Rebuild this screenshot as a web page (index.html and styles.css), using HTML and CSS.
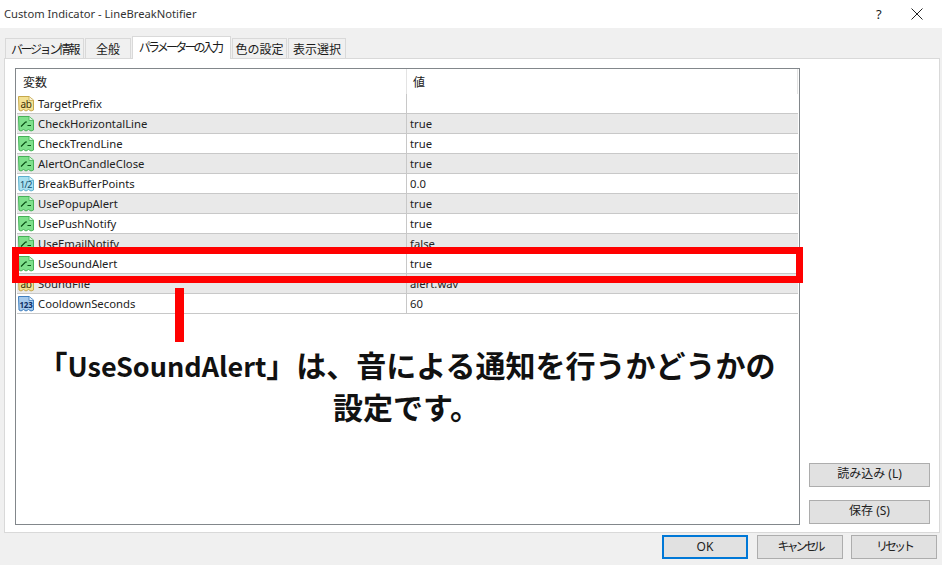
FILE: index.html
```html
<!DOCTYPE html>
<html lang="ja">
<head>
<meta charset="utf-8">
<title>Custom Indicator - LineBreakNotifier</title>
<link rel="stylesheet" href="styles.css">
</head>
<body>
<svg class="defs" width="0" height="0" aria-hidden="true">
  <defs>
    <symbol id="doc" viewBox="0 0 16 17">
      <path d="M.5 1.5h10.5l4.500 3.500v10l-2.500 1-2.500-1.500-2.500 1.500-2.500-1.500-2.500 1.500-2-1z" fill="currentColor" stroke="var(--edge)"/>
      <path d="M11 1.500v4h4.500" fill="#fff" fill-opacity=".7" stroke="var(--edge)" stroke-width=".8"/>
    </symbol>
    <symbol id="bool" viewBox="0 0 16 17">
      <use href="#doc"/>
      <path d="M3 11.500l4.500-4.500h1.500M9.500 10.500h3.500" fill="none" stroke="#0a4f14" stroke-width="1.200"/>
    </symbol>
  </defs>
</svg>
<main class="dialog">
  <header class="titlebar">
    <span class="title">Custom Indicator - LineBreakNotifier</span>
    <span class="help">?</span>
    <svg class="close" width="14" height="14" viewBox="0 0 14 14"><path d="M1.500 1.500l11 11M12.500 1.500l-11 11" stroke="#222" fill="none"/></svg>
  </header>
  <nav class="tabs">
    <span class="tab t1">バージョン情報</span>
    <span class="tab t2">全般</span>
    <span class="tab active">パラメーターの入力</span>
    <span class="tab t4">色の設定</span>
    <span class="tab t5">表示選択</span>
  </nav>
  <section class="panel">
    <div class="table">
      <div class="thead"><span class="th-name">変数</span><span class="th-value">値</span></div>
      <div class="row"><span class="name"><span class="ico ab"><svg width="16" height="17"><use href="#doc"/></svg><b>ab</b></span>TargetPrefix</span><span class="value"></span></div>
      <div class="row"><span class="name"><span class="ico flag"><svg width="16" height="17"><use href="#bool"/></svg></span>CheckHorizontalLine</span><span class="value">true</span></div>
      <div class="row"><span class="name"><span class="ico flag"><svg width="16" height="17"><use href="#bool"/></svg></span>CheckTrendLine</span><span class="value">true</span></div>
      <div class="row"><span class="name"><span class="ico flag"><svg width="16" height="17"><use href="#bool"/></svg></span>AlertOnCandleClose</span><span class="value">true</span></div>
      <div class="row"><span class="name"><span class="ico half"><svg width="16" height="17"><use href="#doc"/></svg><b>1/2</b></span>BreakBufferPoints</span><span class="value">0.0</span></div>
      <div class="row"><span class="name"><span class="ico flag"><svg width="16" height="17"><use href="#bool"/></svg></span>UsePopupAlert</span><span class="value">true</span></div>
      <div class="row"><span class="name"><span class="ico flag"><svg width="16" height="17"><use href="#bool"/></svg></span>UsePushNotify</span><span class="value">true</span></div>
      <div class="row"><span class="name"><span class="ico flag"><svg width="16" height="17"><use href="#bool"/></svg></span>UseEmailNotify</span><span class="value">false</span></div>
      <div class="row"><span class="name"><span class="ico flag"><svg width="16" height="17"><use href="#bool"/></svg></span>UseSoundAlert</span><span class="value">true</span></div>
      <div class="row"><span class="name"><span class="ico ab"><svg width="16" height="17"><use href="#doc"/></svg><b>ab</b></span>SoundFile</span><span class="value">alert.wav</span></div>
      <div class="row"><span class="name"><span class="ico num"><svg width="16" height="17"><use href="#doc"/></svg><b>123</b></span>CooldownSeconds</span><span class="value">60</span></div>
      <div class="highlight"></div>
      <div class="pointer"></div>
      <p class="caption">「<span class="latin">UseSoundAlert</span>」は、音による通知を行うかどうかの<br>設定です。</p>
    </div>
    <aside class="side">
      <button class="btn side-btn">読み込み (L)</button>
      <button class="btn side-btn">保存 (S)</button>
    </aside>
  </section>
  <footer class="footer">
    <button class="btn foot-btn ok">OK</button>
    <button class="btn foot-btn kana">キャンセル</button>
    <button class="btn foot-btn kana">リセット</button>
  </footer>
</main>
</body>
</html>
```
FILE: styles.css
```css
* { box-sizing: border-box; }
html, body { margin: 0; padding: 0; }
body {
  width: 942px;
  height: 565px;
  overflow: hidden;
  background: #f0f0f0;
  color: #1a1a1a;
  font: 11.3px/16px "Noto Sans", "Noto Sans CJK JP", sans-serif;
}
.defs { position: absolute; }
.dialog { display: flex; flex-direction: column; height: 565px; }

.titlebar {
  height: 28px;
  flex: none;
  background: #fff;
  display: flex;
  align-items: center;
  padding: 0 18px 1px 4px;
}
.title { flex: 1; font-size: 11.2px; color: #333; }
.help { margin-right: 26px; font-size: 13px; width: 8px; }
.close { display: block; }

.tabs {
  flex: none;
  height: 30px;
  display: flex;
  align-items: flex-end;
  padding-left: 5px;
  position: relative;
  z-index: 1;
}
.tab {
  height: 20px;
  margin-right: 1px;
  background: #f0f0f0;
  border: 1px solid #d9d9d9;
  border-bottom: 0;
  display: flex;
  justify-content: center;
  align-items: center;
  white-space: nowrap;
  font-family: "Noto Sans CJK JP", sans-serif;
  font-size: 12px;
}
.t1 { width: 79px; letter-spacing: -2.400px; }
.t2 { width: 46px; }
.active {
  width: 99px;
  height: 23px;
  background: #fff;
  margin-bottom: -1px;
  padding: 0 3px 3px 0;
  letter-spacing: -2.800px;
}
.t4 { width: 55px; }
.t5 { width: 58px; }

.panel {
  flex: none;
  height: 475px;
  margin: 0 2px 0 4px;
  background: #fff;
  border: 1px solid #d9d9d9;
  display: flex;
  padding: 9px 9px 7px 10px;
}

.table {
  width: 785px;
  height: 457px;
  border: 1px solid #82878b;
  padding: 0 1px 0 1px;
  position: relative;
  flex: none;
}
.thead { display: flex; height: 25px; font-family: "Noto Sans CJK JP", sans-serif; font-size: 12px; }
.th-name { width: 390px; padding: 5px 0 0 6px; border-right: 1px solid #e3e3e3; }
.th-value { flex: 1; padding: 5px 0 0 6px; border-right: 1px solid #e3e3e3; }

.row {
  display: flex;
  height: 20px;
  border-bottom: 1px solid #c8c8c8;
  line-height: 19px;
}
.row:nth-of-type(odd) { background: #e9e9e9; }
.name {
  width: 390px;
  display: flex;
  align-items: center;
  gap: 4px;
  padding-left: 1px;
  border-right: 1px solid #c8c8c8;
  color: #222;
}
.value { flex: 1; padding-left: 3px; color: #222; }

.ico { position: relative; width: 16px; height: 17px; flex: none; }
.ico svg { display: block; }
.ico b {
  position: absolute;
  left: 0;
  right: 0;
  top: 4px;
  text-align: center;
  font: 400 10px/11px "Noto Sans", sans-serif;
  letter-spacing: -.3px;
}
.ab { color: #f3e193; --edge: #c6a84c; }
.ab b { color: #3d3005; }
.flag { color: #7fe08c; --edge: #45b257; }
.half { color: #a9e0f0; --edge: #5cb0cc; }
.half b { color: #0f4c6a; font-size: 9px; letter-spacing: -.6px; }
.num { color: #a5c9ec; --edge: #3f7fbf; }
.num b { color: #0d2f66; font-size: 8px; font-weight: 700; letter-spacing: -.2px; }

.highlight {
  position: absolute;
  left: -4px;
  top: 178px;
  width: 791px;
  height: 36px;
  border: 7px solid #f00;
}
.pointer {
  position: absolute;
  left: 159px;
  top: 219px;
  width: 9px;
  height: 54px;
  background: #f00;
}
.caption {
  position: absolute;
  left: 0;
  right: 0;
  top: 275px;
  margin: 0;
  padding-right: 2px;
  text-align: center;
  font: 700 30px/40px "Noto Sans CJK JP", sans-serif;
  color: #111;
}
.latin { font-size: 27px; }

.side {
  flex: 1;
  display: flex;
  flex-direction: column;
  justify-content: flex-end;
  align-items: flex-end;
  gap: 13px;
  padding-bottom: 1px;
}
.btn {
  background: #e1e1e1;
  border: 1px solid #adadad;
  padding: 0;
  color: #222;
  font: 12px/16px "Noto Sans", "Noto Sans CJK JP", sans-serif;
}
.side-btn { width: 121px; height: 24px; padding-bottom: 3px; }

.footer {
  flex: none;
  display: flex;
  justify-content: flex-end;
  gap: 8px;
  padding: 2px 5px 0 0;
}
.foot-btn { width: 86px; height: 24px; }
.ok { border: 2px solid #0078d7; margin-right: 1px; }
.kana { letter-spacing: -3px; }
```
